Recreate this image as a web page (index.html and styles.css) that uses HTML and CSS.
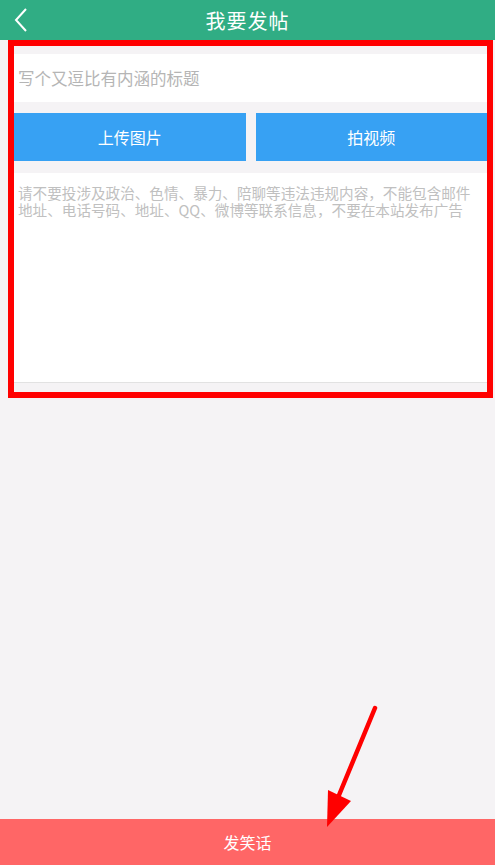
FILE: index.html
```html
<!DOCTYPE html>
<html>
<head>
  <meta charset="utf-8">
  <title>我要发帖</title>
  <link rel="stylesheet" href="styles.css">
</head>
<body>

  <div class="page">
    <div class="topbar">
      <svg class="back" width="14" height="24" viewBox="0 0 14 24">
        <path d="M12 1 L2 12 L12 23" fill="none" stroke="#fff" stroke-width="2"/>
      </svg>
      <div class="topbar-title">我要发帖</div>
    </div>

    <div class="post-form">
      <div class="title-input">写个又逗比有内涵的标题</div>
      <div class="media-buttons">
        <button class="media-btn">上传图片</button>
        <button class="media-btn">拍视频</button>
      </div>
      <div class="content-input">请不要投涉及政治、色情、暴力、陪聊等违法违规内容，不能包含邮件地址、电话号码、地址、QQ、微博等联系信息，不要在本站发布广告</div>
    </div>

    <div class="submit-bar">发笑话</div>

    <!-- annotation overlays -->
    <div class="mark-box"></div>
    <svg class="mark-arrow" width="495" height="865" viewBox="0 0 495 865">
      <line x1="375" y1="708" x2="337" y2="800" stroke="#f00" stroke-width="4.5" stroke-linecap="round"/>
      <polygon points="327,827 328,790 351,801" fill="#f00"/>
    </svg>
  </div>

</body>
</html>
```

FILE: styles.css
```css
* { box-sizing: border-box; }

body {
  margin: 0;
  background: #f5f3f5;
  font-family: "Noto Sans CJK SC", "Noto Sans", sans-serif;
}

.page {
  position: relative;
  height: 865px;
  display: flex;
  flex-direction: column;
  overflow: hidden;
}

/* Header */
.topbar {
  height: 40px;
  background: #30ad84;
  display: flex;
  align-items: center;
  justify-content: center;
  position: relative;
}
.back {
  position: absolute;
  left: 14px;
  top: 8px;
}
.topbar-title {
  color: #fff;
  font-size: 20px;
  letter-spacing: 1px;
}

/* Form */
.post-form {
  flex: 1;
  padding: 14px 8px 0 14px;
}
.title-input {
  height: 48px;
  background: #fff;
  color: #b5b5b5;
  font-size: 16.5px;
  line-height: 48px;
  padding-left: 4px;
}
.media-buttons {
  display: flex;
  gap: 10px;
  margin-top: 11px;
}
.media-btn {
  flex: 1;
  height: 48px;
  border: none;
  background: #37a1f3;
  color: #fff;
  font-family: inherit;
  font-size: 16px;
  padding: 0;
}
.content-input {
  margin-top: 12px;
  height: 210px;
  background: #fff;
  border-bottom: 1px solid #e2e2e2;
  color: #c0c0c0;
  font-size: 14.6px;
  line-height: 17px;
  padding: 11px 8px 0 4px;
}

/* Bottom bar */
.submit-bar {
  height: 46px;
  background: #ff6666;
  color: #fff;
  font-size: 16px;
  display: flex;
  align-items: center;
  justify-content: center;
}

/* Annotations */
.mark-box {
  position: absolute;
  left: 8px;
  top: 40px;
  width: 485px;
  height: 358px;
  border: 6px solid #f00;
}
.mark-arrow {
  position: absolute;
  left: 0;
  top: 0;
}
```
